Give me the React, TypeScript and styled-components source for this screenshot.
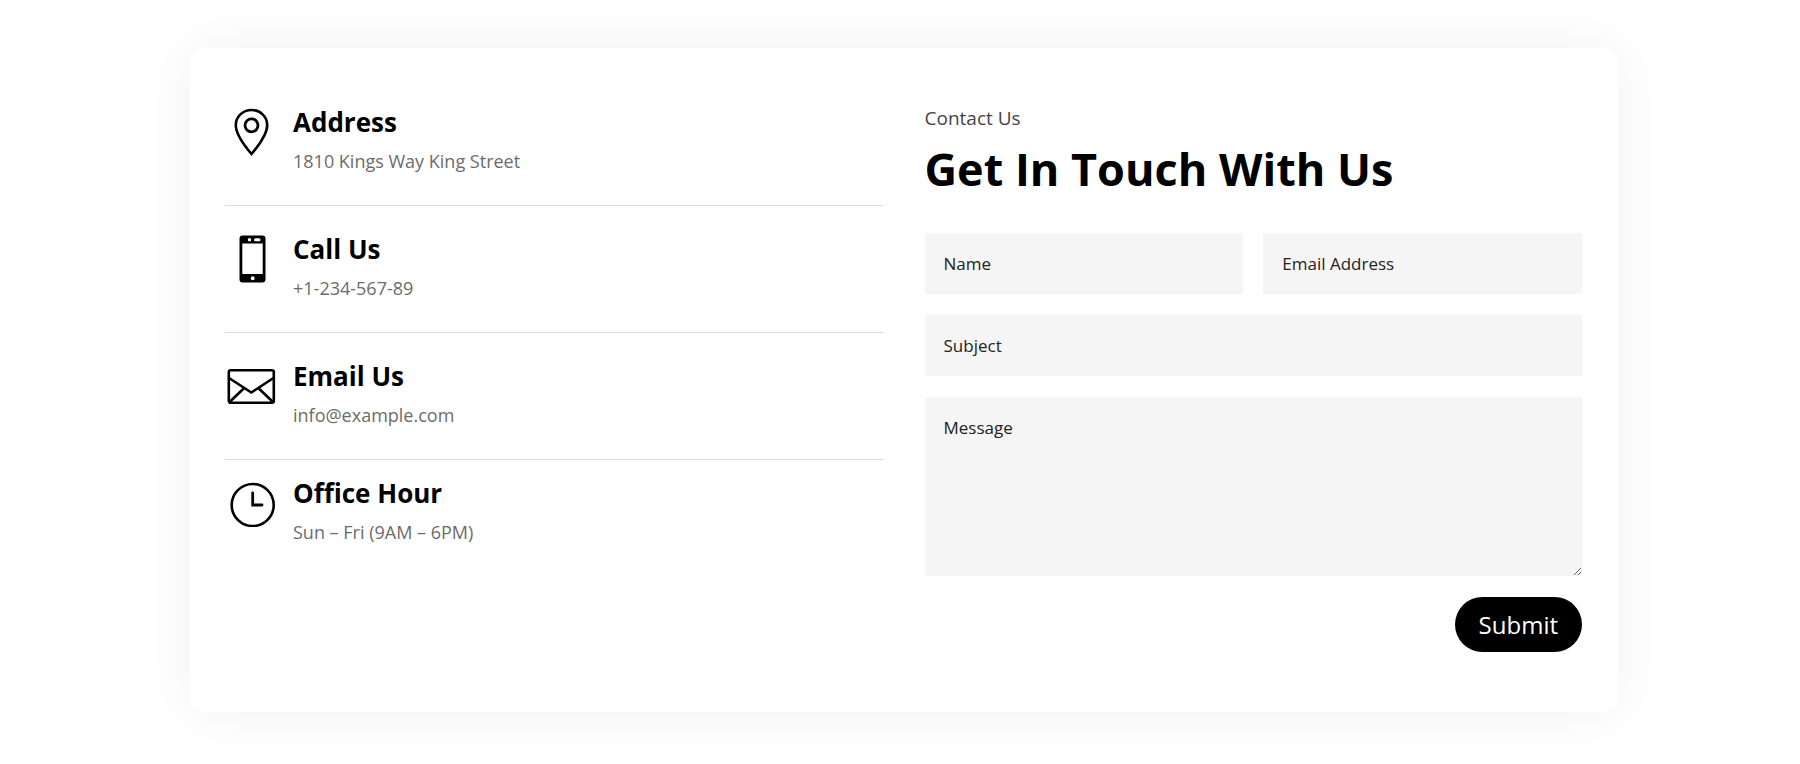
import React from "react";
import styled, { createGlobalStyle } from "styled-components";

const GlobalStyle = createGlobalStyle`
  *, *::before, *::after { box-sizing: border-box; }
  body {
    margin: 0;
    background: #fff;
    color: #000;
    font-family: "Open Sans", Arial, sans-serif;
  }
`;

const Page = styled.main`
  padding: 48px 182px 52px 190px;

  @media (max-width: 1200px) {
    padding: 32px;
  }
`;

const Card = styled.section`
  display: grid;
  grid-template-columns: 1fr 1fr;
  gap: 42px;
  padding: 57px 36px 60px 35px;
  border-radius: 12px;
  background: #fff;
  box-shadow: 0 0 60px rgba(0, 0, 0, 0.06);

  @media (max-width: 900px) {
    grid-template-columns: 1fr;
  }
`;

const InfoList = styled.ul`
  margin: 0;
  padding: 0;
  list-style: none;
`;

const InfoRow = styled.li`
  display: flex;
  gap: 16px;
  padding: 26px 0 28px;
  border-bottom: 1px solid #dcdcdc;

  &:first-child {
    padding-top: 0;
  }

  &:last-child {
    padding-top: 16px;
    border-bottom: 0;
  }
`;

const Icon = styled.svg`
  flex: none;
  width: 52px;
  height: 48px;
  margin-top: 3px;
`;

const InfoTitle = styled.h2`
  margin: 0 0 7px;
  font-size: 26px;
  line-height: 34px;
  font-weight: 700;
`;

const InfoText = styled.p`
  margin: 0;
  color: #6c6c6c;
  font-size: 18px;
  line-height: 31px;
`;

const Eyebrow = styled.p`
  margin: 0;
  color: #444;
  font-size: 19px;
  line-height: 26px;
`;

const Title = styled.h1`
  margin: 8px 0 34px;
  font-size: 45px;
  line-height: 60px;
  font-weight: 700;
`;

const Form = styled.form`
  display: grid;
  grid-template-columns: 1fr 1fr;
  gap: 21px 20px;
`;

const Label = styled.label<{ $wide?: boolean }>`
  display: flex;
  grid-column: ${(p) => (p.$wide ? "1 / -1" : "auto")};
`;

const fieldStyles = `
  width: 100%;
  min-width: 0;
  margin: 0;
  padding: 18px 19px;
  border: 0;
  border-radius: 0;
  background: #f5f5f5;
  color: #222;
  font-family: inherit;
  font-size: 17px;
  line-height: 25px;

  &::placeholder {
    color: #222;
    opacity: 1;
  }
`;

const TextInput = styled.input`
  ${fieldStyles}
  height: 61px;
`;

const TextArea = styled.textarea`
  ${fieldStyles}
  height: 179px;
  resize: vertical;
`;

const SubmitButton = styled.button`
  grid-column: 1 / -1;
  justify-self: end;
  padding: 11px 24px;
  border: 0;
  border-radius: 28px;
  background: #000;
  color: #fff;
  font-family: inherit;
  font-size: 24px;
  line-height: 33px;
  cursor: pointer;
`;

const PinIcon = () => (
  <Icon viewBox="0 0 52 48" aria-hidden="true" fill="none" stroke="#000">
    <path
      d="M26.500 46C21 39.500 10.800 27 10.800 17.200C10.800 8.500 17.800 2 26.500 2S42.200 8.500 42.200 17.200C42.200 27 32 39.500 26.500 46Z"
      strokeWidth="2.600"
    />
    <circle cx="26.500" cy="17.300" r="6.500" strokeWidth="2.800" />
  </Icon>
);

const PhoneIcon = () => (
  <Icon viewBox="0 0 52 48" aria-hidden="true">
    <path
      fillRule="evenodd"
      d="M17.500 0.500H37.500Q40.500 0.500 40.500 3.500V44.500Q40.500 47.500 37.500 47.500H17.500Q14.500 47.500 14.500 44.500V3.500Q14.500 0.500 17.500 0.500ZM17.300 8.500V39H37.700V8.500ZM30.500 3.200A1.500 1.500 0 0 0 30.500 6.200H34A1.500 1.500 0 0 0 34 3.200ZM24.500 3A1.700 1.700 0 1 0 24.500 6.400A1.700 1.700 0 0 0 24.500 3ZM27.700 41.200A2 2 0 1 0 27.700 45.200A2 2 0 0 0 27.700 41.200Z"
    />
  </Icon>
);

const MailIcon = () => (
  <Icon viewBox="0 0 52 48" aria-hidden="true" fill="none" stroke="#000" strokeWidth="2.600">
    <rect x="3.800" y="8.300" width="45" height="32.500" rx="2" />
    <path d="M4 16L26.300 30.500L48.500 16M4.500 40L18.700 26.500M48 40L33.800 26.500" />
  </Icon>
);

const ClockIcon = () => (
  <Icon viewBox="0 0 52 48" aria-hidden="true" fill="none" stroke="#000" strokeWidth="2.600">
    <circle cx="27.700" cy="26" r="21" />
    <path d="M27.700 14V26H37" strokeLinecap="round" strokeWidth="2.800" />
  </Icon>
);

const details = [
  { title: "Address", text: "1810 Kings Way King Street", Glyph: PinIcon },
  { title: "Call Us", text: "+1-234-567-89", Glyph: PhoneIcon },
  { title: "Email Us", text: "info@example.com", Glyph: MailIcon },
  { title: "Office Hour", text: "Sun – Fri (9AM – 6PM)", Glyph: ClockIcon },
];

export default function App() {
  return (
    <>
      <GlobalStyle />
      <Page>
        <Card>
          <InfoList>
            {details.map(({ title, text, Glyph }) => (
              <InfoRow key={title}>
                <Glyph />
                <div>
                  <InfoTitle>{title}</InfoTitle>
                  <InfoText>{text}</InfoText>
                </div>
              </InfoRow>
            ))}
          </InfoList>
          <div>
            <Eyebrow>Contact Us</Eyebrow>
            <Title>Get In Touch With Us</Title>
            <Form onSubmit={(event) => event.preventDefault()}>
              <Label>
                <TextInput type="text" name="name" placeholder="Name" aria-label="Name" />
              </Label>
              <Label>
                <TextInput type="email" name="email" placeholder="Email Address" aria-label="Email Address" />
              </Label>
              <Label $wide>
                <TextInput type="text" name="subject" placeholder="Subject" aria-label="Subject" />
              </Label>
              <Label $wide>
                <TextArea name="message" placeholder="Message" aria-label="Message" />
              </Label>
              <SubmitButton type="submit">Submit</SubmitButton>
            </Form>
          </div>
        </Card>
      </Page>
    </>
  );
}
